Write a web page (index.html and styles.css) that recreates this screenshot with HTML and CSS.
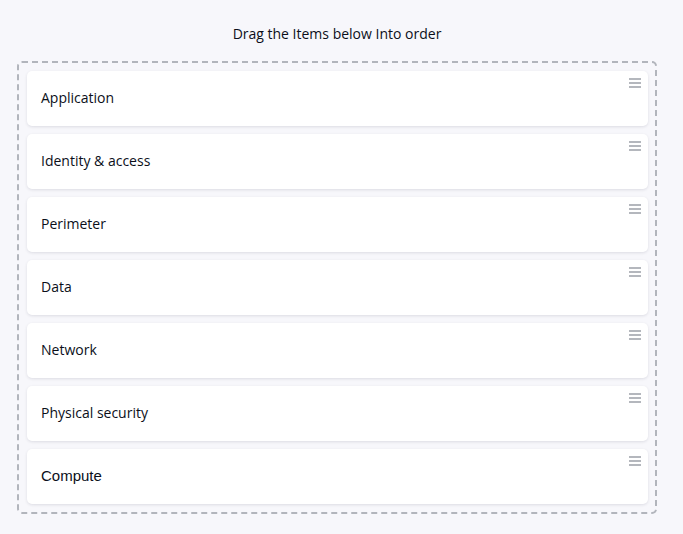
FILE: index.html
```html
<!DOCTYPE html>
<html lang="en">
<head>
<meta charset="utf-8">
<title>Order items</title>
<link rel="stylesheet" href="styles.css">
</head>
<body>
<div class="page">
  <h1 class="title">Drag the Items below Into order</h1>
  <ul class="list">
    <li class="card"><span class="label">Application</span><svg class="handle" viewBox="0 0 12 10" width="12" height="10"><rect x="0" y="0" width="12" height="2"/><rect x="0" y="4" width="12" height="2"/><rect x="0" y="8" width="12" height="2"/></svg></li>
    <li class="card"><span class="label">Identity &amp; access</span><svg class="handle" viewBox="0 0 12 10" width="12" height="10"><rect x="0" y="0" width="12" height="2"/><rect x="0" y="4" width="12" height="2"/><rect x="0" y="8" width="12" height="2"/></svg></li>
    <li class="card"><span class="label">Perimeter</span><svg class="handle" viewBox="0 0 12 10" width="12" height="10"><rect x="0" y="0" width="12" height="2"/><rect x="0" y="4" width="12" height="2"/><rect x="0" y="8" width="12" height="2"/></svg></li>
    <li class="card"><span class="label">Data</span><svg class="handle" viewBox="0 0 12 10" width="12" height="10"><rect x="0" y="0" width="12" height="2"/><rect x="0" y="4" width="12" height="2"/><rect x="0" y="8" width="12" height="2"/></svg></li>
    <li class="card"><span class="label">Network</span><svg class="handle" viewBox="0 0 12 10" width="12" height="10"><rect x="0" y="0" width="12" height="2"/><rect x="0" y="4" width="12" height="2"/><rect x="0" y="8" width="12" height="2"/></svg></li>
    <li class="card"><span class="label">Physical security</span><svg class="handle" viewBox="0 0 12 10" width="12" height="10"><rect x="0" y="0" width="12" height="2"/><rect x="0" y="4" width="12" height="2"/><rect x="0" y="8" width="12" height="2"/></svg></li>
    <li class="card"><span class="label label-alt">Compute</span><svg class="handle" viewBox="0 0 12 10" width="12" height="10"><rect x="0" y="0" width="12" height="2"/><rect x="0" y="4" width="12" height="2"/><rect x="0" y="8" width="12" height="2"/></svg></li>
  </ul>
</div>
</body>
</html>
```
FILE: styles.css
```css
html, body {
  margin: 0;
  padding: 0;
  background: #f7f7fb;
}
body {
  font-family: "Open Sans", "Noto Sans", sans-serif;
  color: #0b0f1a;
}
.page {
  width: 640px;
  margin-left: 17px;
  padding-top: 24px;
}
.title {
  margin: 0 0 17px 0;
  font-size: 14px;
  font-weight: 500;
  line-height: 20px;
  text-align: center;
}
.list {
  list-style: none;
  margin: 0;
  padding: 8px 7px 8px 8px;
  border: 2px dashed #b2b5bc;
  border-radius: 5px;
  display: flex;
  flex-direction: column;
  gap: 8px;
}
.card {
  position: relative;
  height: 55px;
  background: #ffffff;
  border-radius: 5px;
  box-shadow: 0 1px 3px rgba(30, 35, 60, 0.12);
  display: flex;
  align-items: center;
  padding-left: 14px;
}
.label {
  font-size: 14px;
  font-weight: 500;
  line-height: 20px;
  padding-bottom: 2px;
}
.label-alt {
  font-family: "Liberation Sans", Arial, sans-serif;
  font-size: 15px;
  font-weight: 400;
}
.handle {
  position: absolute;
  top: 7px;
  right: 7px;
  fill: #b4b7bd;
}
```
